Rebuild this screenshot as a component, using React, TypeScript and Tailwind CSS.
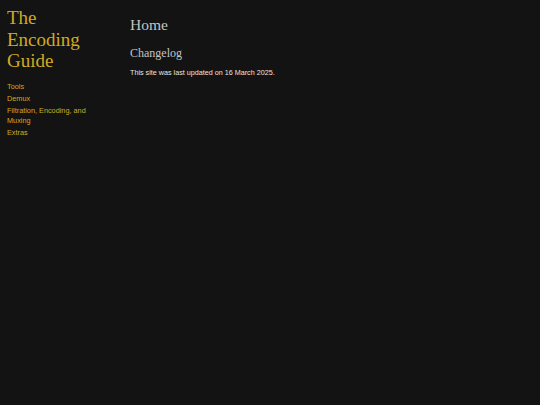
export default function App() {
  const links = ['Tools', 'Demux', 'Filtration, Encoding, and Muxing', 'Extras'];
  return (
    <div className="min-h-screen w-full bg-[#131313] flex font-['Liberation_Sans',sans-serif]">
      <aside className="w-[130px] shrink-0 pl-[7px] pr-[40px] pt-[7px]">
        <h1 className="font-['Liberation_Serif',serif] text-[19px] leading-[21.5px] text-[#d1aa22]">
          The Encoding Guide
        </h1>
        <nav className="mt-[10px] flex flex-col gap-[2px]">
          {links.map((l) => (
            <a key={l} href="#" className="text-[7.3px] leading-[10px] text-[#d1aa22]">
              {l}
            </a>
          ))}
        </nav>
      </aside>
      <main className="pt-[16px]">
        <h2 className="font-['Liberation_Serif',serif] text-[15.5px] leading-[18px] text-[#c4c4c4]">Home</h2>
        <h3 className="mt-[11px] font-['Liberation_Serif',serif] text-[12px] leading-[16px] text-[#c4c4c4]">
          Changelog
        </h3>
        <p className="mt-[7px] text-[7.2px] leading-[10px] text-[#e6e6e6]">
          This site was last updated on 16 March 2025.
        </p>
      </main>
    </div>
  );
}
